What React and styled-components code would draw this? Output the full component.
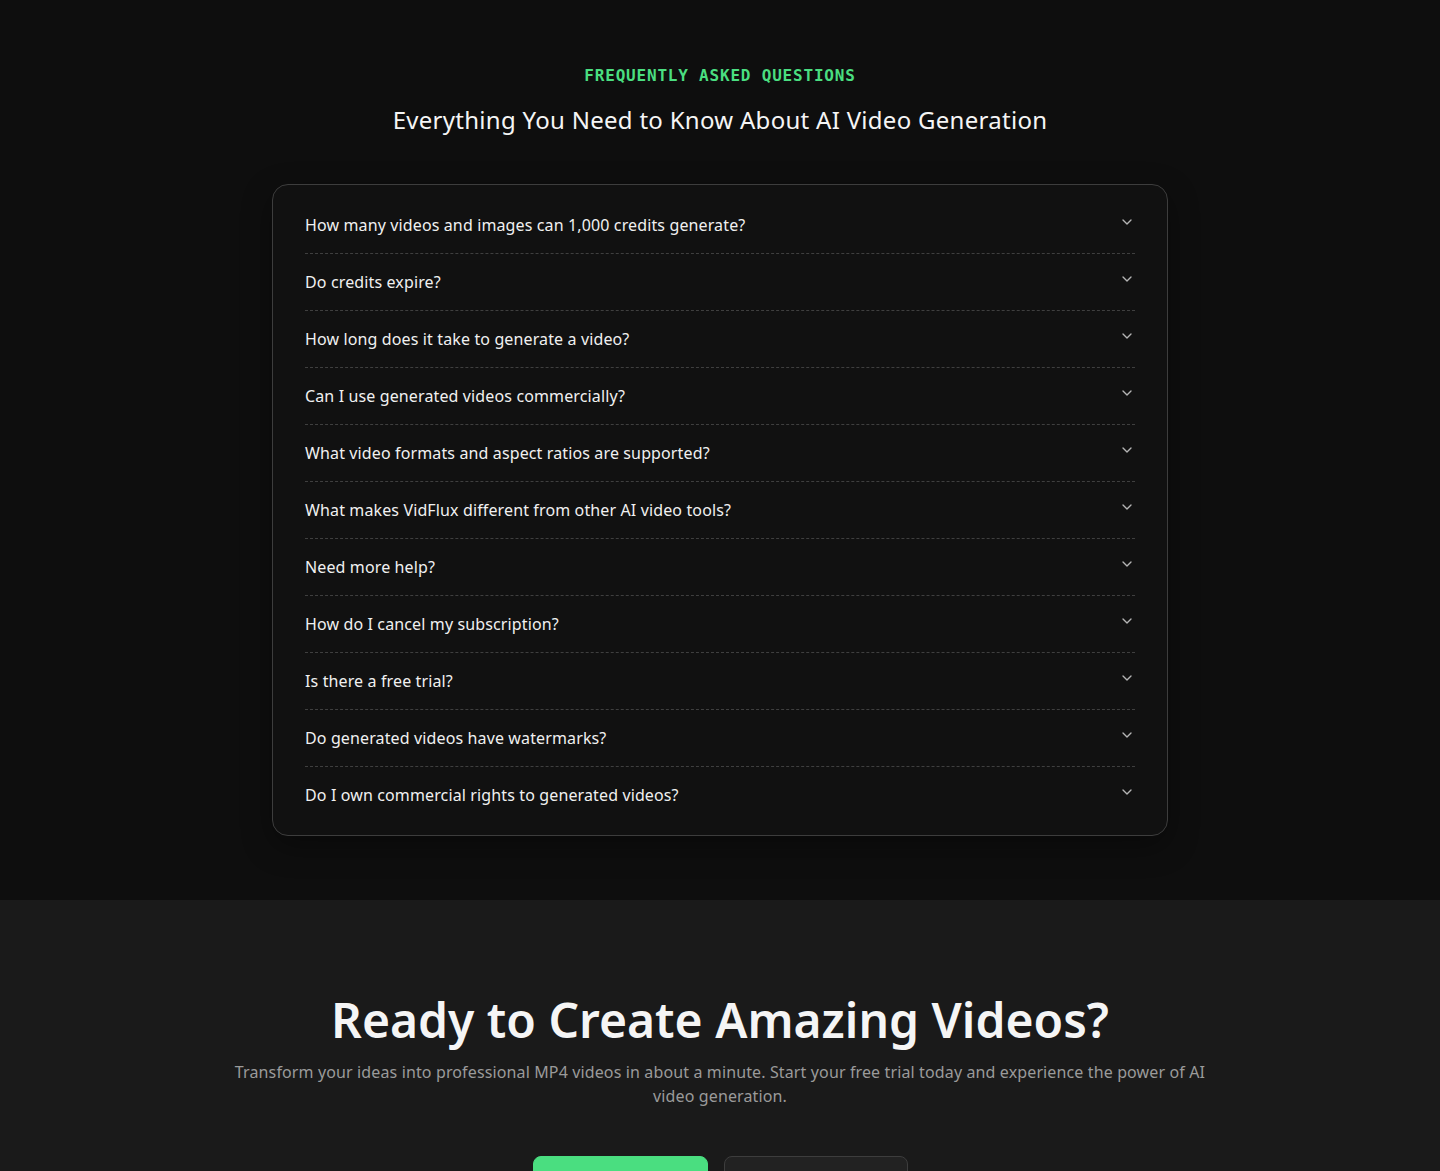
import React from 'react'
import styled, { createGlobalStyle } from 'styled-components'
import { ChevronDown, Tag } from 'lucide-react'

const GlobalStyle = createGlobalStyle`
  * { box-sizing: border-box; }
  body {
    margin: 0;
    background: #0e0e0e;
    color: #f2f2f2;
    font-family: "Noto Sans", "Open Sans", sans-serif;
    letter-spacing: 0.008em;
    -webkit-font-smoothing: antialiased;
  }
`

const FaqSection = styled.section`
  background: #0e0e0e;
  padding: 64px 0 64px;
  display: flex;
  flex-direction: column;
  align-items: center;
`

const Eyebrow = styled.div`
  font-family: "DejaVu Sans Mono", "Liberation Mono", monospace;
  font-size: 16px;
  line-height: 24px;
  font-weight: 600;
  letter-spacing: 0.05em;
  color: #4ade80;
  text-transform: uppercase;
`

const Heading = styled.h2`
  margin: 16px 0 48px;
  font-size: 24px;
  line-height: 32px;
  font-weight: 400;
  letter-spacing: 0.012em;
  color: #f5f5f5;
`

const Card = styled.div`
  width: 896px;
  padding: 12px 32px 12px;
  background: #111111;
  border: 1px solid #3d3d3d;
  border-radius: 16px;
  box-shadow: 0 10px 30px rgba(0, 0, 0, 0.35);
`

const Row = styled.div`
  display: flex;
  align-items: center;
  justify-content: space-between;
  padding: 16px 0;
  border-bottom: ${({ last }) => (last ? 'none' : '1px dashed #3f3f3f')};
  cursor: pointer;
`

const Question = styled.span`
  font-size: 16px;
  line-height: 24px;
  color: #f0f0f0;
`

const Chevron = styled(ChevronDown)`
  flex-shrink: 0;
  color: #b5b5b5;
  margin-top: -6px;
`

const CtaSection = styled.section`
  background: #1a1a1a;
  padding: 96px 24px 80px;
  display: flex;
  flex-direction: column;
  align-items: center;
  text-align: center;
`

const CtaTitle = styled.h2`
  margin: 0 0 16px;
  font-size: 48px;
  line-height: 1;
  font-weight: 600;
  letter-spacing: 0;
  color: #f5f5f5;
`

const CtaText = styled.p`
  margin: 0;
  max-width: 980px;
  font-size: 16px;
  line-height: 24px;
  color: #9a9a9a;
`

const Buttons = styled.div`
  display: flex;
  gap: 16px;
  margin-top: 48px;
`

const Button = styled.button`
  display: inline-flex;
  align-items: center;
  justify-content: center;
  gap: 8px;
  height: 48px;
  padding: 0;
  border-radius: 8px;
  font-family: inherit;
  font-size: 16px;
  font-weight: 600;
  letter-spacing: inherit;
  white-space: nowrap;
  cursor: pointer;
  border: 1px solid ${({ primary }) => (primary ? '#4ade80' : '#3d3d3d')};
  background: ${({ primary }) => (primary ? '#4ade80' : '#222222')};
  color: ${({ primary }) => (primary ? '#0e0e0e' : '#f0f0f0')};
  width: ${({ primary }) => (primary ? '175px' : '184px')};
`

const questions = [
  'How many videos and images can 1,000 credits generate?',
  'Do credits expire?',
  'How long does it take to generate a video?',
  'Can I use generated videos commercially?',
  'What video formats and aspect ratios are supported?',
  'What makes VidFlux different from other AI video tools?',
  'Need more help?',
  'How do I cancel my subscription?',
  'Is there a free trial?',
  'Do generated videos have watermarks?',
  'Do I own commercial rights to generated videos?',
]

export default function App() {
  return (
    <>
      <GlobalStyle />
      <FaqSection>
        <Eyebrow>Frequently Asked Questions</Eyebrow>
        <Heading>Everything You Need to Know About AI Video Generation</Heading>
        <Card>
          {questions.map((q, i) => (
            <Row key={q} last={i === questions.length - 1}>
              <Question>{q}</Question>
              <Chevron size={16} strokeWidth={2} />
            </Row>
          ))}
        </Card>
      </FaqSection>
      <CtaSection>
        <CtaTitle>Ready to Create Amazing Videos?</CtaTitle>
        <CtaText>
          Transform your ideas into professional MP4 videos in about a minute. Start your free
          trial today and experience the power of AI video generation.
        </CtaText>
        <Buttons>
          <Button primary>Get Started Free</Button>
          <Button>
            <Tag size={16} />
            View Pricing
          </Button>
        </Buttons>
      </CtaSection>
    </>
  )
}
